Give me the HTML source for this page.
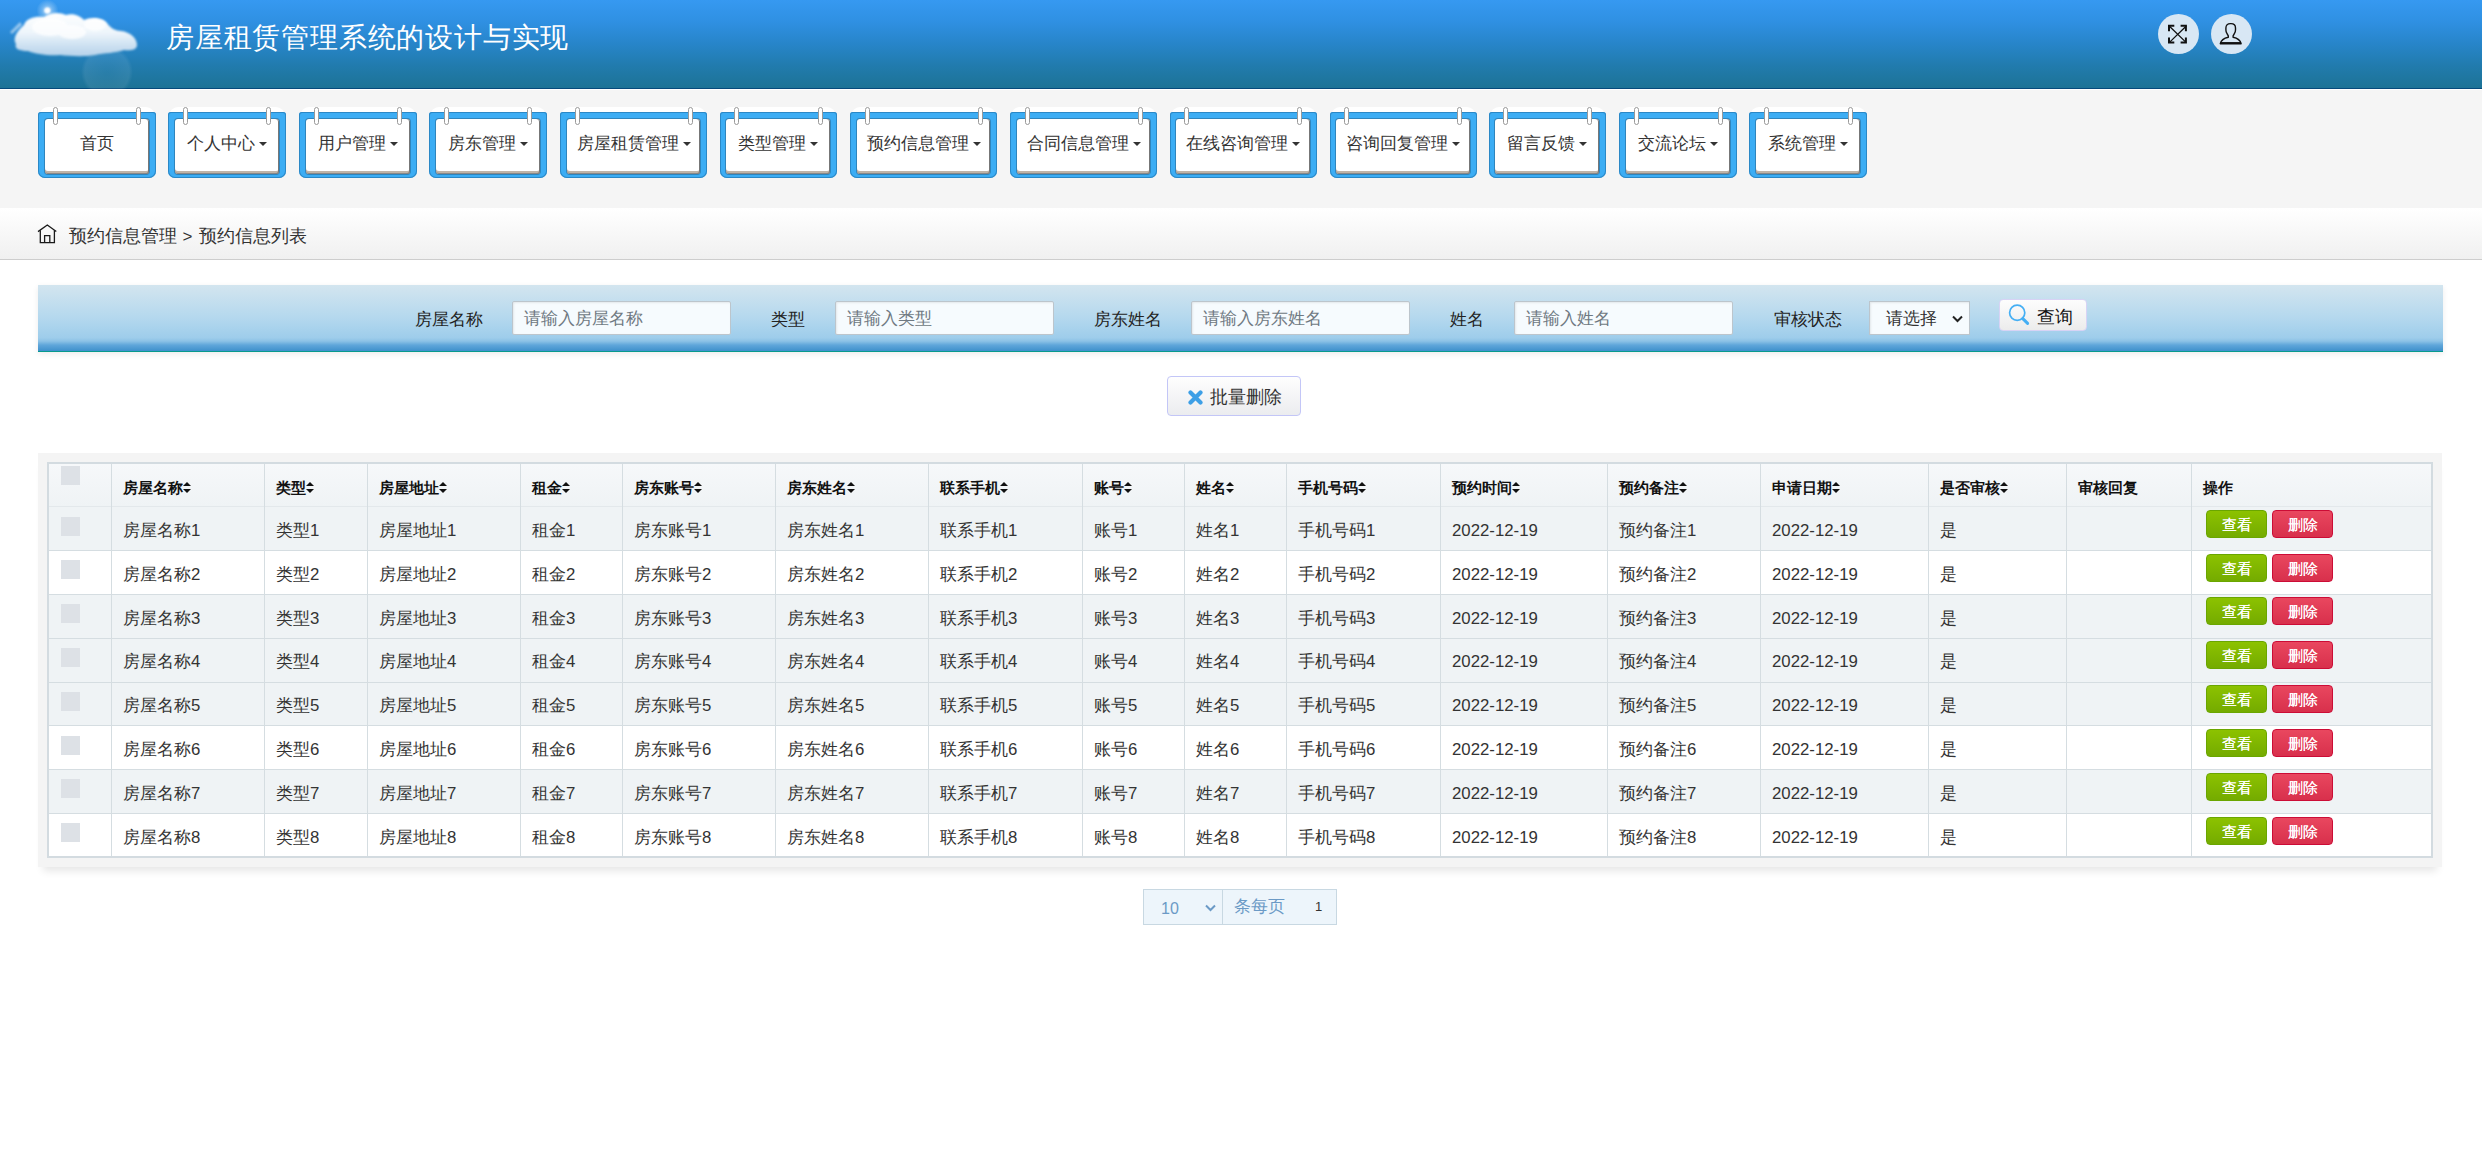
<!DOCTYPE html>
<html><head><meta charset="utf-8">
<style>
*{box-sizing:border-box;margin:0;padding:0}
html,body{width:2482px;height:1149px;overflow:hidden;background:#fff;font-family:"Liberation Sans", sans-serif;color:#333}
.abs{position:absolute}
#hdr{position:absolute;left:0;top:0;width:2482px;height:89px;background:linear-gradient(#3699f1 0%,#2f90e2 25%,#2785c9 50%,#217bad 75%,#1d7396 100%);border-bottom:1px solid #064a7c}
#hdr .white{position:absolute;left:0;top:89px;width:2482px;height:1px;background:#fff}
#title{position:absolute;left:166px;top:17px;font-size:28.4px;line-height:40px;color:#fff;letter-spacing:0.8px;white-space:nowrap}
.hic{position:absolute;top:14px;width:41px;height:40px;border-radius:50%;background:#d8e7f4}
#navarea{position:absolute;left:0;top:90px;width:2482px;height:118px;background:#f5f5f5}
.nb{position:absolute;top:106px;height:74px}
.nb-bg{position:absolute;left:1px;right:1px;top:0.5px;bottom:12px;background:#fff;border-radius:9px}
.nb-frame{position:absolute;left:0;right:0;top:6px;bottom:2px;background:#3cadf4;border-radius:3px 3px 7px 7px;box-shadow:inset 0 0 0 1px #2b88c6}
.nb-in{position:absolute;left:6.5px;right:7px;top:13px;bottom:6px;background:#fff;border-radius:3px;box-shadow:inset -1px 0 0 #777, inset 0 -1px 0 #888, inset 0 -3px 0 #c0b4a8, 0 0 0 1px #2f85bd}
.ring{position:absolute;top:1px;width:5px;height:18px;background:#fff;border:1px solid #9a9a9a;border-radius:2.5px}
.r1{left:14.5px} .r2{right:14.5px}
.nb-t{position:absolute;left:0;right:0;top:24px;height:28px;line-height:28px;text-align:center;font-size:17px;color:#333;white-space:nowrap}
.caret{display:inline-block;width:0;height:0;border-left:4px solid transparent;border-right:4px solid transparent;border-top:4.5px solid #333;vertical-align:middle;margin-left:4px;margin-top:-2px}
#bc{position:absolute;left:0;top:208px;width:2482px;height:52px;background:linear-gradient(#fff,#f0f0f0);border-bottom:1px solid #cdcdcd}
#bctext{position:absolute;left:69px;top:223px;font-size:17.5px;line-height:26px;color:#333;white-space:nowrap}
#search{position:absolute;left:38px;top:285px;width:2405px;height:67px;background:linear-gradient(#d3e5ef 0%,#b4d8ee 50%,#9ecdeb 80%,#8cc2e6 85%,#5fa6da 91%,#3f90cb 100%);border-bottom:1px solid #079a8e;box-shadow:0 2px 6px rgba(0,0,0,0.08)}
.lbl{position:absolute;top:305.5px;font-size:17px;line-height:28px;color:#222;white-space:nowrap}
.inp{position:absolute;top:301px;width:219px;height:34px;background:#f6fbfe;border:1px solid #bcc5cc;border-radius:2px;box-shadow:inset 1px 1px 2px rgba(0,0,0,0.08);font-size:17px;line-height:34px;padding-left:11.5px;color:#6f7982;white-space:nowrap}
#sel{position:absolute;left:1869px;top:301px;width:101px;height:34px;background:#f6fbfe;border:1px solid #bcc5cc;box-shadow:inset 1px 1px 2px rgba(0,0,0,0.08);font-size:17px;line-height:34px;padding-left:16px;color:#333}
#qbtn{position:absolute;left:1999px;top:298.5px;width:88px;height:32px;border:1px solid #d7d3f5;border-radius:4px;background:linear-gradient(#fdfdfd,#ececec)}
#delbtn{position:absolute;left:1167px;top:376px;width:134px;height:40px;border:1px solid #c3c6f7;border-radius:4px;background:linear-gradient(#fefefe,#ebecef)}
#tbwrap{position:absolute;left:38px;top:453px;width:2404px;height:414px;background:#f4f4f4;box-shadow:0 9px 8px -5px rgba(0,0,0,0.10)}
.th{font-size:14.8px;font-weight:bold;color:#111;line-height:22px;white-space:nowrap}
.td{font-size:16.8px;color:#333;line-height:22px;white-space:nowrap}
.cb{width:19px;height:19px;background:#dde1e6}
.sort{display:inline-block;width:8px;height:11px;position:relative;vertical-align:middle;margin-left:0px;top:-1px}
.sort:before{content:"";position:absolute;left:0;top:0;border-left:4px solid transparent;border-right:4px solid transparent;border-bottom:4.5px solid #111}
.sort:after{content:"";position:absolute;left:0;top:6.5px;border-left:4px solid transparent;border-right:4px solid transparent;border-top:4.5px solid #111}
.bt{width:61px;height:28px;line-height:28px;text-align:center;color:#fff;font-size:14.6px;font-weight:500;border-radius:4px;text-shadow:0 0 0.4px #fff}
.bg{background:linear-gradient(#8cc200,#74ab00);border:1px solid #6aa600}
.br{background:linear-gradient(#e9475f,#d8304c);border:1px solid #cc0c36}
#pager{position:absolute;left:1143px;top:889px;width:194px;height:36px;background:#edf5fb;border:1px solid #c8d8e2}
</style></head><body>
<div id="hdr"><div class="white"></div>
<svg class="abs" style="left:0;top:0" width="160" height="89" viewBox="0 0 160 89">
<defs><filter id="bl" x="-30%" y="-30%" width="160%" height="160%"><feGaussianBlur stdDeviation="1.3"/></filter>
<filter id="bl2"><feGaussianBlur stdDeviation="4"/></filter><filter id="bl3" x="-100%" y="-100%" width="300%" height="300%"><feGaussianBlur stdDeviation="0.8"/></filter>
<radialGradient id="sun"><stop offset="0" stop-color="#fff" stop-opacity="0.9"/><stop offset="0.35" stop-color="#fff" stop-opacity="0.35"/><stop offset="1" stop-color="#fff" stop-opacity="0"/></radialGradient>
<radialGradient id="orb"><stop offset="0" stop-color="#fff" stop-opacity="0.04"/><stop offset="0.85" stop-color="#fff" stop-opacity="0.08"/><stop offset="1" stop-color="#fff" stop-opacity="0"/></radialGradient>
</defs>
<circle cx="107" cy="72" r="26" fill="url(#orb)"/>
<linearGradient id="cg" x1="0" y1="0" x2="0" y2="1"><stop offset="0" stop-color="#ffffff"/><stop offset="0.45" stop-color="#eef5fb"/><stop offset="0.8" stop-color="#c9def0"/><stop offset="1" stop-color="#b7d3ea"/></linearGradient>
<g filter="url(#bl)" fill="url(#cg)">
<path d="M16 44 C12 38 18 30 24 25 C26 18 36 16 44 17 C50 12 60 12 66 15 C74 13 80 16 84 20 C90 17 102 17 107 23 C110 28 116 31 121 31 C130 32 137 38 137 45 C137 50 130 51 124 50 C116 53 104 53 95 55 C84 57 70 56 60 55 C48 56 36 54 28 51 C20 51 14 49 16 44 Z"/>
</g>
<g filter="url(#bl)" fill="#ffffff" opacity="0.75">
<ellipse cx="50" cy="27" rx="18" ry="9"/><ellipse cx="95" cy="25" rx="11" ry="6"/><ellipse cx="72" cy="32" rx="14" ry="7"/>
</g>
<g fill="#ffffff" opacity="0.5" filter="url(#bl)"><path d="M10 32 L20 22 L22 25 L12 34Z"/></g>
<circle cx="47.5" cy="10.5" r="11" fill="url(#sun)"/><circle cx="47.3" cy="10.5" r="3" fill="#fff" filter="url(#bl3)"/>
</svg>
<div id="title">房屋租赁管理系统的设计与实现</div>
<div class="hic" style="left:2158px"><svg width="41" height="41" viewBox="0 0 41 41" fill="none" stroke="#111"><path d="M11.2 12L28.3 28.6M28.3 12L11.2 28.6" stroke-width="1.3"/><path d="M11 17.2V11.8H16.3M22.6 11.8H27.9V17.2M27.9 23.4V28.6H22.6M16.3 28.6H11V23.4" stroke-width="2"/></svg></div>
<div class="hic" style="left:2211px"><svg width="41" height="41" viewBox="0 0 41 41" fill="none" stroke="#111" stroke-width="1.4" stroke-linejoin="round"><path d="M19.4 9.6c-2.7 0-4.5 1.7-4.5 4.4v2.1c0 1.4 0.4 2.4 1 3.2l1.4 2.6v1.4c-4.4 0.9-7.3 3.3-8 6.4H30.1c-0.7-3.1-3.6-5.5-8-6.4v-1.4l1.4-2.6c0.6-0.8 1-1.8 1-3.2v-2.1c0-2.7-1.8-4.4-4.5-4.4z"/><path d="M9.3 28.9H30.1" stroke-width="1.7"/></svg></div>
</div>
<div id="navarea"></div>
<div class="nb" style="left:38.00px;width:117.8px"><div class="nb-bg"></div><div class="nb-frame"></div><div class="nb-in"></div><div class="ring r1"></div><div class="ring r2"></div><div class="nb-t">首页</div></div>
<div class="nb" style="left:168.10px;width:117.8px"><div class="nb-bg"></div><div class="nb-frame"></div><div class="nb-in"></div><div class="ring r1"></div><div class="ring r2"></div><div class="nb-t">个人中心<span class="caret"></span></div></div>
<div class="nb" style="left:299.00px;width:117.8px"><div class="nb-bg"></div><div class="nb-frame"></div><div class="nb-in"></div><div class="ring r1"></div><div class="ring r2"></div><div class="nb-t">用户管理<span class="caret"></span></div></div>
<div class="nb" style="left:429.20px;width:117.8px"><div class="nb-bg"></div><div class="nb-frame"></div><div class="nb-in"></div><div class="ring r1"></div><div class="ring r2"></div><div class="nb-t">房东管理<span class="caret"></span></div></div>
<div class="nb" style="left:560.30px;width:147px"><div class="nb-bg"></div><div class="nb-frame"></div><div class="nb-in"></div><div class="ring r1"></div><div class="ring r2"></div><div class="nb-t">房屋租赁管理<span class="caret"></span></div></div>
<div class="nb" style="left:719.60px;width:117.8px"><div class="nb-bg"></div><div class="nb-frame"></div><div class="nb-in"></div><div class="ring r1"></div><div class="ring r2"></div><div class="nb-t">类型管理<span class="caret"></span></div></div>
<div class="nb" style="left:850.40px;width:147px"><div class="nb-bg"></div><div class="nb-frame"></div><div class="nb-in"></div><div class="ring r1"></div><div class="ring r2"></div><div class="nb-t">预约信息管理<span class="caret"></span></div></div>
<div class="nb" style="left:1010.30px;width:147px"><div class="nb-bg"></div><div class="nb-frame"></div><div class="nb-in"></div><div class="ring r1"></div><div class="ring r2"></div><div class="nb-t">合同信息管理<span class="caret"></span></div></div>
<div class="nb" style="left:1169.60px;width:147px"><div class="nb-bg"></div><div class="nb-frame"></div><div class="nb-in"></div><div class="ring r1"></div><div class="ring r2"></div><div class="nb-t">在线咨询管理<span class="caret"></span></div></div>
<div class="nb" style="left:1329.80px;width:147px"><div class="nb-bg"></div><div class="nb-frame"></div><div class="nb-in"></div><div class="ring r1"></div><div class="ring r2"></div><div class="nb-t">咨询回复管理<span class="caret"></span></div></div>
<div class="nb" style="left:1488.50px;width:117.8px"><div class="nb-bg"></div><div class="nb-frame"></div><div class="nb-in"></div><div class="ring r1"></div><div class="ring r2"></div><div class="nb-t">留言反馈<span class="caret"></span></div></div>
<div class="nb" style="left:1619.30px;width:117.8px"><div class="nb-bg"></div><div class="nb-frame"></div><div class="nb-in"></div><div class="ring r1"></div><div class="ring r2"></div><div class="nb-t">交流论坛<span class="caret"></span></div></div>
<div class="nb" style="left:1749.30px;width:117.8px"><div class="nb-bg"></div><div class="nb-frame"></div><div class="nb-in"></div><div class="ring r1"></div><div class="ring r2"></div><div class="nb-t">系统管理<span class="caret"></span></div></div>
<div id="bc"></div>
<svg class="abs" style="left:37px;top:224px" width="20" height="20" viewBox="0 0 20 20" fill="none" stroke="#1a1a1a" stroke-width="1.3"><path d="M1 7.6L10.3 1L19.3 7.6"/><path d="M3.3 6.2V18.7H17.4V6.2"/><path d="M7.6 18.7V11.6H12.8V18.7"/></svg>
<div id="bctext">预约信息管理<span style="display:inline-block;font-size:17px;margin:0 7px 0 5.5px">&gt;</span>预约信息列表</div>
<div id="search"></div>
<div class="lbl" style="left:415px">房屋名称</div>
<div class="inp" style="left:511.5px">请输入房屋名称</div>
<div class="lbl" style="left:771px">类型</div>
<div class="inp" style="left:834.5px">请输入类型</div>
<div class="lbl" style="left:1094px">房东姓名</div>
<div class="inp" style="left:1190.5px">请输入房东姓名</div>
<div class="lbl" style="left:1450px">姓名</div>
<div class="inp" style="left:1513.5px">请输入姓名</div>
<div class="lbl" style="left:1774px">审核状态</div>
<div id="sel">请选择<svg class="abs" style="left:82px;top:13px" width="11" height="8" viewBox="0 0 11 8" fill="none" stroke="#222" stroke-width="2"><path d="M1 1.5L5.5 6L10 1.5"/></svg></div>
<div id="qbtn"><svg class="abs" style="left:7px;top:3px" width="24" height="24" viewBox="0 0 24 24" fill="none" stroke="#45aff4" stroke-width="1.7"><circle cx="10.2" cy="9.8" r="7.6"/><path d="M15.8 15.6L20.6 20.4" stroke-width="3" stroke-linecap="round"/></svg><span class="abs" style="left:37px;top:4px;font-size:17.8px;line-height:26px;color:#111">查询</span></div>
<div id="delbtn"><svg class="abs" style="left:20px;top:13px" width="15" height="15" viewBox="0 0 15 15" stroke="#3d9fe6" stroke-width="4.2" stroke-linecap="round"><path d="M2.5 2.5L12.5 12.5M12.5 2.5L2.5 12.5"/></svg><span class="abs" style="left:42px;top:7px;font-size:17.5px;line-height:26px;color:#333">批量删除</span></div>
<div id="tbwrap"></div>
<div class="abs" style="left:49px;top:464px;width:2382px;height:42px;background:linear-gradient(#f6f8fa,#eff3f5)"></div>
<div class="abs" style="left:49px;top:507px;width:2382px;height:43px;background:#eff3f5"></div>
<div class="abs" style="left:49px;top:551px;width:2382px;height:43px;background:#ffffff"></div>
<div class="abs" style="left:49px;top:595px;width:2382px;height:43px;background:#eff3f5"></div>
<div class="abs" style="left:49px;top:639px;width:2382px;height:42.5px;background:#eff3f5"></div>
<div class="abs" style="left:49px;top:682.5px;width:2382px;height:42.799999999999955px;background:#eff3f5"></div>
<div class="abs" style="left:49px;top:726.3px;width:2382px;height:42.700000000000045px;background:#ffffff"></div>
<div class="abs" style="left:49px;top:770px;width:2382px;height:43px;background:#eff3f5"></div>
<div class="abs" style="left:49px;top:814px;width:2382px;height:42px;background:#ffffff"></div>
<div class="abs" style="left:49px;top:506px;width:2382px;height:1px;background:#e3e8eb"></div>
<div class="abs" style="left:49px;top:550px;width:2382px;height:1px;background:#d5dde1"></div>
<div class="abs" style="left:49px;top:594px;width:2382px;height:1px;background:#d5dde1"></div>
<div class="abs" style="left:49px;top:638px;width:2382px;height:1px;background:#d5dde1"></div>
<div class="abs" style="left:49px;top:681.5px;width:2382px;height:1px;background:#d5dde1"></div>
<div class="abs" style="left:49px;top:725.3px;width:2382px;height:1px;background:#d5dde1"></div>
<div class="abs" style="left:49px;top:769px;width:2382px;height:1px;background:#d5dde1"></div>
<div class="abs" style="left:49px;top:813px;width:2382px;height:1px;background:#d5dde1"></div>
<div class="abs" style="left:111px;top:464px;width:1px;height:392px;background:#d5dde1"></div>
<div class="abs" style="left:264px;top:464px;width:1px;height:392px;background:#d5dde1"></div>
<div class="abs" style="left:367px;top:464px;width:1px;height:392px;background:#d5dde1"></div>
<div class="abs" style="left:520px;top:464px;width:1px;height:392px;background:#d5dde1"></div>
<div class="abs" style="left:622px;top:464px;width:1px;height:392px;background:#d5dde1"></div>
<div class="abs" style="left:775px;top:464px;width:1px;height:392px;background:#d5dde1"></div>
<div class="abs" style="left:928px;top:464px;width:1px;height:392px;background:#d5dde1"></div>
<div class="abs" style="left:1082px;top:464px;width:1px;height:392px;background:#d5dde1"></div>
<div class="abs" style="left:1184px;top:464px;width:1px;height:392px;background:#d5dde1"></div>
<div class="abs" style="left:1286px;top:464px;width:1px;height:392px;background:#d5dde1"></div>
<div class="abs" style="left:1440px;top:464px;width:1px;height:392px;background:#d5dde1"></div>
<div class="abs" style="left:1607px;top:464px;width:1px;height:392px;background:#d5dde1"></div>
<div class="abs" style="left:1760px;top:464px;width:1px;height:392px;background:#d5dde1"></div>
<div class="abs" style="left:1928px;top:464px;width:1px;height:392px;background:#d5dde1"></div>
<div class="abs" style="left:2066px;top:464px;width:1px;height:392px;background:#d5dde1"></div>
<div class="abs" style="left:2191px;top:464px;width:1px;height:392px;background:#d5dde1"></div>
<div class="abs" style="left:47px;top:462px;width:1386px;height:396px;border:2px solid #d3dbe0;width:2386px"></div>
<div class="abs cb" style="left:61px;top:466px"></div>
<div class="abs th" style="left:123px;top:476.5px">房屋名称<span class="sort"></span></div>
<div class="abs th" style="left:276px;top:476.5px">类型<span class="sort"></span></div>
<div class="abs th" style="left:379px;top:476.5px">房屋地址<span class="sort"></span></div>
<div class="abs th" style="left:532px;top:476.5px">租金<span class="sort"></span></div>
<div class="abs th" style="left:634px;top:476.5px">房东账号<span class="sort"></span></div>
<div class="abs th" style="left:787px;top:476.5px">房东姓名<span class="sort"></span></div>
<div class="abs th" style="left:940px;top:476.5px">联系手机<span class="sort"></span></div>
<div class="abs th" style="left:1094px;top:476.5px">账号<span class="sort"></span></div>
<div class="abs th" style="left:1196px;top:476.5px">姓名<span class="sort"></span></div>
<div class="abs th" style="left:1298px;top:476.5px">手机号码<span class="sort"></span></div>
<div class="abs th" style="left:1452px;top:476.5px">预约时间<span class="sort"></span></div>
<div class="abs th" style="left:1619px;top:476.5px">预约备注<span class="sort"></span></div>
<div class="abs th" style="left:1772px;top:476.5px">申请日期<span class="sort"></span></div>
<div class="abs th" style="left:1940px;top:476.5px">是否审核<span class="sort"></span></div>
<div class="abs th" style="left:2078px;top:476.5px">审核回复</div>
<div class="abs th" style="left:2203px;top:476.5px">操作</div>
<div class="abs cb" style="left:61px;top:516.50px"></div>
<div class="abs td" style="left:123px;top:520.00px">房屋名称1</div>
<div class="abs td" style="left:276px;top:520.00px">类型1</div>
<div class="abs td" style="left:379px;top:520.00px">房屋地址1</div>
<div class="abs td" style="left:532px;top:520.00px">租金1</div>
<div class="abs td" style="left:634px;top:520.00px">房东账号1</div>
<div class="abs td" style="left:787px;top:520.00px">房东姓名1</div>
<div class="abs td" style="left:940px;top:520.00px">联系手机1</div>
<div class="abs td" style="left:1094px;top:520.00px">账号1</div>
<div class="abs td" style="left:1196px;top:520.00px">姓名1</div>
<div class="abs td" style="left:1298px;top:520.00px">手机号码1</div>
<div class="abs td" style="left:1452px;top:520.00px">2022-12-19</div>
<div class="abs td" style="left:1619px;top:520.00px">预约备注1</div>
<div class="abs td" style="left:1772px;top:520.00px">2022-12-19</div>
<div class="abs td" style="left:1940px;top:520.00px">是</div>
<div class="abs bt bg" style="left:2206px;top:509.80px">查看</div><div class="abs bt br" style="left:2272px;top:509.80px">删除</div>
<div class="abs cb" style="left:61px;top:560.33px"></div>
<div class="abs td" style="left:123px;top:563.83px">房屋名称2</div>
<div class="abs td" style="left:276px;top:563.83px">类型2</div>
<div class="abs td" style="left:379px;top:563.83px">房屋地址2</div>
<div class="abs td" style="left:532px;top:563.83px">租金2</div>
<div class="abs td" style="left:634px;top:563.83px">房东账号2</div>
<div class="abs td" style="left:787px;top:563.83px">房东姓名2</div>
<div class="abs td" style="left:940px;top:563.83px">联系手机2</div>
<div class="abs td" style="left:1094px;top:563.83px">账号2</div>
<div class="abs td" style="left:1196px;top:563.83px">姓名2</div>
<div class="abs td" style="left:1298px;top:563.83px">手机号码2</div>
<div class="abs td" style="left:1452px;top:563.83px">2022-12-19</div>
<div class="abs td" style="left:1619px;top:563.83px">预约备注2</div>
<div class="abs td" style="left:1772px;top:563.83px">2022-12-19</div>
<div class="abs td" style="left:1940px;top:563.83px">是</div>
<div class="abs bt bg" style="left:2206px;top:553.63px">查看</div><div class="abs bt br" style="left:2272px;top:553.63px">删除</div>
<div class="abs cb" style="left:61px;top:604.16px"></div>
<div class="abs td" style="left:123px;top:607.66px">房屋名称3</div>
<div class="abs td" style="left:276px;top:607.66px">类型3</div>
<div class="abs td" style="left:379px;top:607.66px">房屋地址3</div>
<div class="abs td" style="left:532px;top:607.66px">租金3</div>
<div class="abs td" style="left:634px;top:607.66px">房东账号3</div>
<div class="abs td" style="left:787px;top:607.66px">房东姓名3</div>
<div class="abs td" style="left:940px;top:607.66px">联系手机3</div>
<div class="abs td" style="left:1094px;top:607.66px">账号3</div>
<div class="abs td" style="left:1196px;top:607.66px">姓名3</div>
<div class="abs td" style="left:1298px;top:607.66px">手机号码3</div>
<div class="abs td" style="left:1452px;top:607.66px">2022-12-19</div>
<div class="abs td" style="left:1619px;top:607.66px">预约备注3</div>
<div class="abs td" style="left:1772px;top:607.66px">2022-12-19</div>
<div class="abs td" style="left:1940px;top:607.66px">是</div>
<div class="abs bt bg" style="left:2206px;top:597.46px">查看</div><div class="abs bt br" style="left:2272px;top:597.46px">删除</div>
<div class="abs cb" style="left:61px;top:647.99px"></div>
<div class="abs td" style="left:123px;top:651.49px">房屋名称4</div>
<div class="abs td" style="left:276px;top:651.49px">类型4</div>
<div class="abs td" style="left:379px;top:651.49px">房屋地址4</div>
<div class="abs td" style="left:532px;top:651.49px">租金4</div>
<div class="abs td" style="left:634px;top:651.49px">房东账号4</div>
<div class="abs td" style="left:787px;top:651.49px">房东姓名4</div>
<div class="abs td" style="left:940px;top:651.49px">联系手机4</div>
<div class="abs td" style="left:1094px;top:651.49px">账号4</div>
<div class="abs td" style="left:1196px;top:651.49px">姓名4</div>
<div class="abs td" style="left:1298px;top:651.49px">手机号码4</div>
<div class="abs td" style="left:1452px;top:651.49px">2022-12-19</div>
<div class="abs td" style="left:1619px;top:651.49px">预约备注4</div>
<div class="abs td" style="left:1772px;top:651.49px">2022-12-19</div>
<div class="abs td" style="left:1940px;top:651.49px">是</div>
<div class="abs bt bg" style="left:2206px;top:641.29px">查看</div><div class="abs bt br" style="left:2272px;top:641.29px">删除</div>
<div class="abs cb" style="left:61px;top:691.82px"></div>
<div class="abs td" style="left:123px;top:695.32px">房屋名称5</div>
<div class="abs td" style="left:276px;top:695.32px">类型5</div>
<div class="abs td" style="left:379px;top:695.32px">房屋地址5</div>
<div class="abs td" style="left:532px;top:695.32px">租金5</div>
<div class="abs td" style="left:634px;top:695.32px">房东账号5</div>
<div class="abs td" style="left:787px;top:695.32px">房东姓名5</div>
<div class="abs td" style="left:940px;top:695.32px">联系手机5</div>
<div class="abs td" style="left:1094px;top:695.32px">账号5</div>
<div class="abs td" style="left:1196px;top:695.32px">姓名5</div>
<div class="abs td" style="left:1298px;top:695.32px">手机号码5</div>
<div class="abs td" style="left:1452px;top:695.32px">2022-12-19</div>
<div class="abs td" style="left:1619px;top:695.32px">预约备注5</div>
<div class="abs td" style="left:1772px;top:695.32px">2022-12-19</div>
<div class="abs td" style="left:1940px;top:695.32px">是</div>
<div class="abs bt bg" style="left:2206px;top:685.12px">查看</div><div class="abs bt br" style="left:2272px;top:685.12px">删除</div>
<div class="abs cb" style="left:61px;top:735.65px"></div>
<div class="abs td" style="left:123px;top:739.15px">房屋名称6</div>
<div class="abs td" style="left:276px;top:739.15px">类型6</div>
<div class="abs td" style="left:379px;top:739.15px">房屋地址6</div>
<div class="abs td" style="left:532px;top:739.15px">租金6</div>
<div class="abs td" style="left:634px;top:739.15px">房东账号6</div>
<div class="abs td" style="left:787px;top:739.15px">房东姓名6</div>
<div class="abs td" style="left:940px;top:739.15px">联系手机6</div>
<div class="abs td" style="left:1094px;top:739.15px">账号6</div>
<div class="abs td" style="left:1196px;top:739.15px">姓名6</div>
<div class="abs td" style="left:1298px;top:739.15px">手机号码6</div>
<div class="abs td" style="left:1452px;top:739.15px">2022-12-19</div>
<div class="abs td" style="left:1619px;top:739.15px">预约备注6</div>
<div class="abs td" style="left:1772px;top:739.15px">2022-12-19</div>
<div class="abs td" style="left:1940px;top:739.15px">是</div>
<div class="abs bt bg" style="left:2206px;top:728.95px">查看</div><div class="abs bt br" style="left:2272px;top:728.95px">删除</div>
<div class="abs cb" style="left:61px;top:779.48px"></div>
<div class="abs td" style="left:123px;top:782.98px">房屋名称7</div>
<div class="abs td" style="left:276px;top:782.98px">类型7</div>
<div class="abs td" style="left:379px;top:782.98px">房屋地址7</div>
<div class="abs td" style="left:532px;top:782.98px">租金7</div>
<div class="abs td" style="left:634px;top:782.98px">房东账号7</div>
<div class="abs td" style="left:787px;top:782.98px">房东姓名7</div>
<div class="abs td" style="left:940px;top:782.98px">联系手机7</div>
<div class="abs td" style="left:1094px;top:782.98px">账号7</div>
<div class="abs td" style="left:1196px;top:782.98px">姓名7</div>
<div class="abs td" style="left:1298px;top:782.98px">手机号码7</div>
<div class="abs td" style="left:1452px;top:782.98px">2022-12-19</div>
<div class="abs td" style="left:1619px;top:782.98px">预约备注7</div>
<div class="abs td" style="left:1772px;top:782.98px">2022-12-19</div>
<div class="abs td" style="left:1940px;top:782.98px">是</div>
<div class="abs bt bg" style="left:2206px;top:772.78px">查看</div><div class="abs bt br" style="left:2272px;top:772.78px">删除</div>
<div class="abs cb" style="left:61px;top:823.31px"></div>
<div class="abs td" style="left:123px;top:826.81px">房屋名称8</div>
<div class="abs td" style="left:276px;top:826.81px">类型8</div>
<div class="abs td" style="left:379px;top:826.81px">房屋地址8</div>
<div class="abs td" style="left:532px;top:826.81px">租金8</div>
<div class="abs td" style="left:634px;top:826.81px">房东账号8</div>
<div class="abs td" style="left:787px;top:826.81px">房东姓名8</div>
<div class="abs td" style="left:940px;top:826.81px">联系手机8</div>
<div class="abs td" style="left:1094px;top:826.81px">账号8</div>
<div class="abs td" style="left:1196px;top:826.81px">姓名8</div>
<div class="abs td" style="left:1298px;top:826.81px">手机号码8</div>
<div class="abs td" style="left:1452px;top:826.81px">2022-12-19</div>
<div class="abs td" style="left:1619px;top:826.81px">预约备注8</div>
<div class="abs td" style="left:1772px;top:826.81px">2022-12-19</div>
<div class="abs td" style="left:1940px;top:826.81px">是</div>
<div class="abs bt bg" style="left:2206px;top:816.61px">查看</div><div class="abs bt br" style="left:2272px;top:816.61px">删除</div>
<div id="pager"><div class="abs" style="left:77.5px;top:0;width:1px;height:34px;background:#c8d8e2"></div>
<span class="abs" style="left:17px;top:7px;font-size:16px;line-height:24px;color:#6b9ac6">10</span>
<svg class="abs" style="left:61px;top:14px" width="11" height="8" viewBox="0 0 11 8" fill="none" stroke="#6b9ac6" stroke-width="2"><path d="M1 1.5L5.5 6L10 1.5"/></svg>
<span class="abs" style="left:90px;top:4px;font-size:17px;line-height:26px;color:#6b9ac6">条每页</span>
<span class="abs" style="left:171px;top:6px;font-size:13px;line-height:22px;color:#333">1</span>
</div>
</body></html>
